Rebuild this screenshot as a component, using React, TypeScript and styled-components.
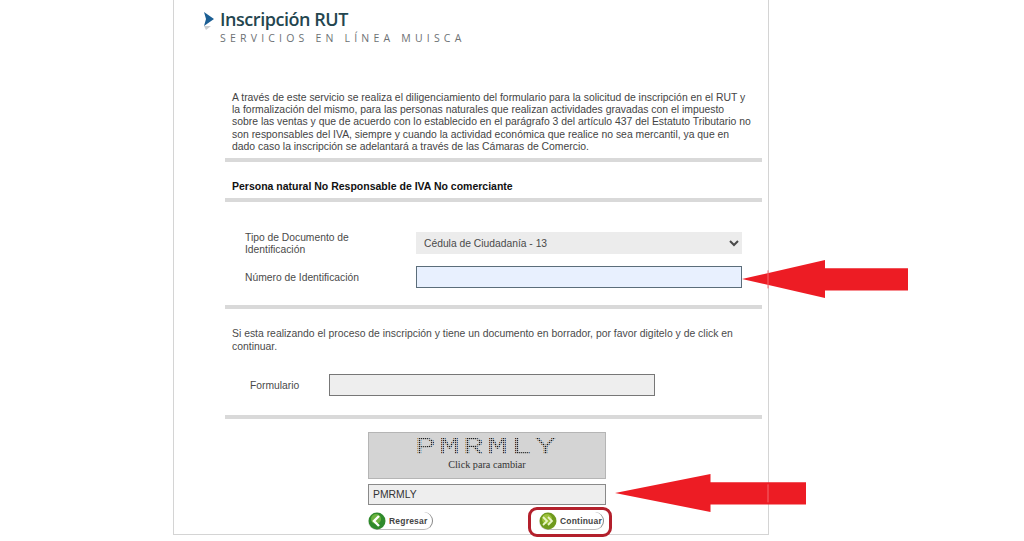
import React from 'react';
import styled, { createGlobalStyle } from 'styled-components';

const GlobalStyle = createGlobalStyle`
  html, body {
    margin: 0;
    padding: 0;
    background: #fff;
  }
  body {
    font-family: "Liberation Sans", Arial, sans-serif;
    color: #333;
  }
`;

const Arrow: React.FC<{ className?: string; width: number; height: number; seam: number }> = ({
  className,
  width,
  height,
  seam,
}) => {
  const neck = width * 0.5;
  const top = height * 0.22;
  const bottom = height * 0.8;
  return (
    <svg className={className} width={width} height={height} viewBox={`0 0 ${width} ${height}`}>
      <path
        d={`M0 ${height / 2} L${neck} 0 L${neck} ${top} L${width} ${top} L${width} ${bottom} L${neck} ${bottom} L${neck} ${height} Z`}
        fill="#ed1c24"
      />
      <line x1={seam} x2={seam} y1={top + 2} y2={bottom - 2} stroke="#f4686d" />
    </svg>
  );
};

const App: React.FC = () => {
  return (
    <>
      <GlobalStyle />
      <Page>
        <Panel>
          <Header>
            <svg width="12" height="21" viewBox="0 0 12 21">
              <path d="M1 2 L11 9 L1 16 L3 9 Z" fill="#1c5f94" />
              <path d="M1 16 L8 16 L3 20 Z" fill="#c9cdd0" />
            </svg>
            <HeaderText>
              <Title>Inscripción RUT</Title>
              <Subtitle>SERVICIOS EN LÍNEA MUISCA</Subtitle>
            </HeaderText>
          </Header>

          <Intro>
            A través de este servicio se realiza el diligenciamiento del formulario para la solicitud de inscripción en el RUT y
            <br />
            la formalización del mismo, para las personas naturales que realizan actividades gravadas con el impuesto
            <br />
            sobre las ventas y que de acuerdo con lo establecido en el parágrafo 3 del artículo 437 del Estatuto Tributario no
            <br />
            son responsables del IVA, siempre y cuando la actividad económica que realice no sea mercantil, ya que en
            <br />
            dado caso la inscripción se adelantará a través de las Cámaras de Comercio.
          </Intro>
          <Divider />
          <SectionTitle>Persona natural No Responsable de IVA No comerciante</SectionTitle>
          <Divider />

          <FieldGrid>
            <FieldLabel>
              Tipo de Documento de
              <br />
              Identificación
            </FieldLabel>
            <DocSelect defaultValue="13">
              <option value="13">Cédula de Ciudadanía - 13</option>
            </DocSelect>
            <FieldLabel>Número de Identificación</FieldLabel>
            <IdInput />
          </FieldGrid>
          <Divider />

          <DraftNote>
            Si esta realizando el proceso de inscripción y tiene un documento en borrador, por favor digitelo y de click en
            <br />
            continuar.
          </DraftNote>
          <DraftRow>
            <DraftLabel>Formulario</DraftLabel>
            <DraftInput readOnly />
          </DraftRow>
          <Divider />

          <CaptchaArea>
            <CaptchaBox>
              <CaptchaImage width="236" height="28" viewBox="0 0 236 28">
                <defs>
                  <pattern
                    id="captcha-dots"
                    width="2"
                    height="2"
                    patternUnits="userSpaceOnUse"
                    patternTransform="scale(0.69 1)"
                  >
                    <rect width="1.3" height="1.2" fill="#1d1d1d" />
                  </pattern>
                </defs>
                <CaptchaGlyphs transform="translate(46 21) scale(1.45 1)" fill="url(#captcha-dots)">
                  PMRMLY
                </CaptchaGlyphs>
              </CaptchaImage>
              <CaptchaHint>Click para cambiar</CaptchaHint>
            </CaptchaBox>
            <CaptchaInput defaultValue="PMRMLY" />
            <Actions>
              <PillButton>
                <svg width="18" height="18" viewBox="0 0 18 18">
                  <circle cx="9" cy="9" r="8.5" fill="#2f8a2c" />
                  <circle cx="8" cy="7" r="5" fill="#6cb33f" />
                  <path d="M11 4 L6 9 L11 14" fill="none" stroke="#fff" strokeWidth="2.4" />
                </svg>
                <PillLabel>Regresar</PillLabel>
              </PillButton>
              <PillButton>
                <svg width="18" height="18" viewBox="0 0 18 18">
                  <circle cx="9" cy="9" r="8.5" fill="#6f9a1e" />
                  <circle cx="8" cy="7" r="5" fill="#9cc13a" />
                  <path
                    d="M4 5 L8 9 L4 13 M9 5 L13 9 L9 13"
                    fill="none"
                    stroke="#e9f5c8"
                    strokeWidth="1.8"
                  />
                </svg>
                <PillLabel>Continuar</PillLabel>
              </PillButton>
            </Actions>
          </CaptchaArea>

          <UpperArrow width={166} height={38} seam={26} />
          <LowerArrow width={191} height={38} seam={153} />
          <ContinueHighlight />
        </Panel>
      </Page>
    </>
  );
};

const Page = styled.div`
  width: 1024px;
  height: 541px;
  overflow: hidden;
  background: #fff;
`;

const Panel = styled.div`
  position: relative;
  box-sizing: border-box;
  width: 596px;
  height: 535px;
  margin-left: 173px;
  padding: 0 6px 0 51px;
  border-left: 1px solid #d4d4d4;
  border-right: 1px solid #d4d4d4;
  border-bottom: 1px solid #d4d4d4;
`;

const Header = styled.div`
  display: flex;
  gap: 6px;
  height: 92px;
  padding-top: 10px;
  margin-left: -22px;
  box-sizing: border-box;
`;

const HeaderText = styled.div`
  display: flex;
  flex-direction: column;
  margin-left: -1px;
`;

const Title = styled.div`
  font-family: "Open Sans", sans-serif;
  font-size: 18px;
  line-height: 19px;
  letter-spacing: -0.45px;
  color: #24464f;
  font-weight: 600;
`;

const Subtitle = styled.div`
  margin-top: 1px;
  font-family: "Open Sans", sans-serif;
  font-size: 10.5px;
  line-height: 16px;
  letter-spacing: 4.2px;
  color: #6d7174;
  white-space: nowrap;
`;

const Intro = styled.p`
  margin: 0;
  padding-left: 7px;
  font-size: 10.4px;
  line-height: 12.2px;
  height: 66px;
  color: #444;
  white-space: nowrap;
`;

const Divider = styled.div`
  height: 4px;
  background: #d9d9d9;
`;

const SectionTitle = styled.div`
  height: 36px;
  padding-left: 7px;
  font-size: 10.5px;
  font-weight: 700;
  line-height: 48px;
  color: #111;
  white-space: nowrap;
`;

const FieldGrid = styled.div`
  display: grid;
  grid-template-columns: 171px 326px;
  grid-template-rows: 22px 22px;
  row-gap: 12px;
  align-items: center;
  height: 103px;
  padding: 30px 0 0 20px;
  box-sizing: border-box;
`;

const FieldLabel = styled.div`
  padding-top: 1px;
  font-size: 10.3px;
  line-height: 12px;
  color: #4a4a4a;
  white-space: nowrap;
`;

const DocSelect = styled.select`
  width: 326px;
  height: 22px;
  box-sizing: border-box;
  padding: 0 4px;
  border: none;
  background: #ececec;
  font-family: "Liberation Sans", Arial, sans-serif;
  font-size: 10.3px;
  color: #4a4a4a;
`;

const IdInput = styled.input`
  width: 326px;
  height: 22px;
  box-sizing: border-box;
  border: 1px solid #5b6d7a;
  background: #e8f0fe;
`;

const DraftNote = styled.p`
  margin: 0;
  height: 55px;
  padding: 19px 0 0 7px;
  box-sizing: border-box;
  font-size: 10.4px;
  line-height: 12.5px;
  color: #4a4a4a;
  white-space: nowrap;
`;

const DraftRow = styled.div`
  display: flex;
  align-items: center;
  box-sizing: border-box;
  height: 51px;
  padding: 10px 0 19px 25px;
`;

const DraftLabel = styled.div`
  width: 79px;
  font-size: 10.3px;
  color: #4a4a4a;
`;

const DraftInput = styled.input`
  width: 326px;
  height: 22px;
  box-sizing: border-box;
  border: 1px solid #777;
  background: #eeeeee;
`;

const CaptchaArea = styled.div`
  display: flex;
  flex-direction: column;
  width: 238px;
  margin: 13px 0 0 143px;
`;

const CaptchaBox = styled.div`
  box-sizing: border-box;
  height: 47px;
  border: 1px solid #b5b5b5;
  background: #d4d4d4;
  text-align: center;
`;

const CaptchaImage = styled.svg`
  display: block;
`;

const CaptchaGlyphs = styled.text`
  font-family: "Liberation Mono", monospace;
  font-size: 24px;
  letter-spacing: 2.15px;
`;

const CaptchaHint = styled.div`
  margin-top: -2px;
  font-family: "Liberation Serif", serif;
  font-size: 10.2px;
  line-height: 12px;
  color: #333;
`;

const CaptchaInput = styled.input`
  box-sizing: border-box;
  width: 238px;
  height: 21px;
  margin: 5px 0 0;
  padding: 0 4px;
  border: 1px solid #8a8a8a;
  background: #eeeeee;
  font-family: "Liberation Sans", Arial, sans-serif;
  font-size: 10.4px;
  color: #333;
`;

const Actions = styled.div`
  display: flex;
  justify-content: space-between;
  margin-top: 7px;
  padding-right: 2px;
`;

const PillButton = styled.div`
  display: flex;
  align-items: center;
  gap: 3px;
  box-sizing: border-box;
  width: 65px;
  height: 18px;
  border-right: 1px solid #888;
  border-bottom: 1px solid #bbb;
  border-radius: 9px;
`;

const PillLabel = styled.span`
  font-size: 8.5px;
  font-weight: 700;
  letter-spacing: 0.2px;
  color: #444;
  white-space: nowrap;
`;

const UpperArrow = styled(Arrow)`
  position: absolute;
  left: 568px;
  top: 260px;
`;

const LowerArrow = styled(Arrow)`
  position: absolute;
  left: 441px;
  top: 474px;
`;

const ContinueHighlight = styled.div`
  position: absolute;
  left: 354px;
  top: 507px;
  width: 84px;
  height: 30px;
  box-sizing: border-box;
  border: 3px solid #b3202c;
  border-radius: 9px;
`;

export default App;
